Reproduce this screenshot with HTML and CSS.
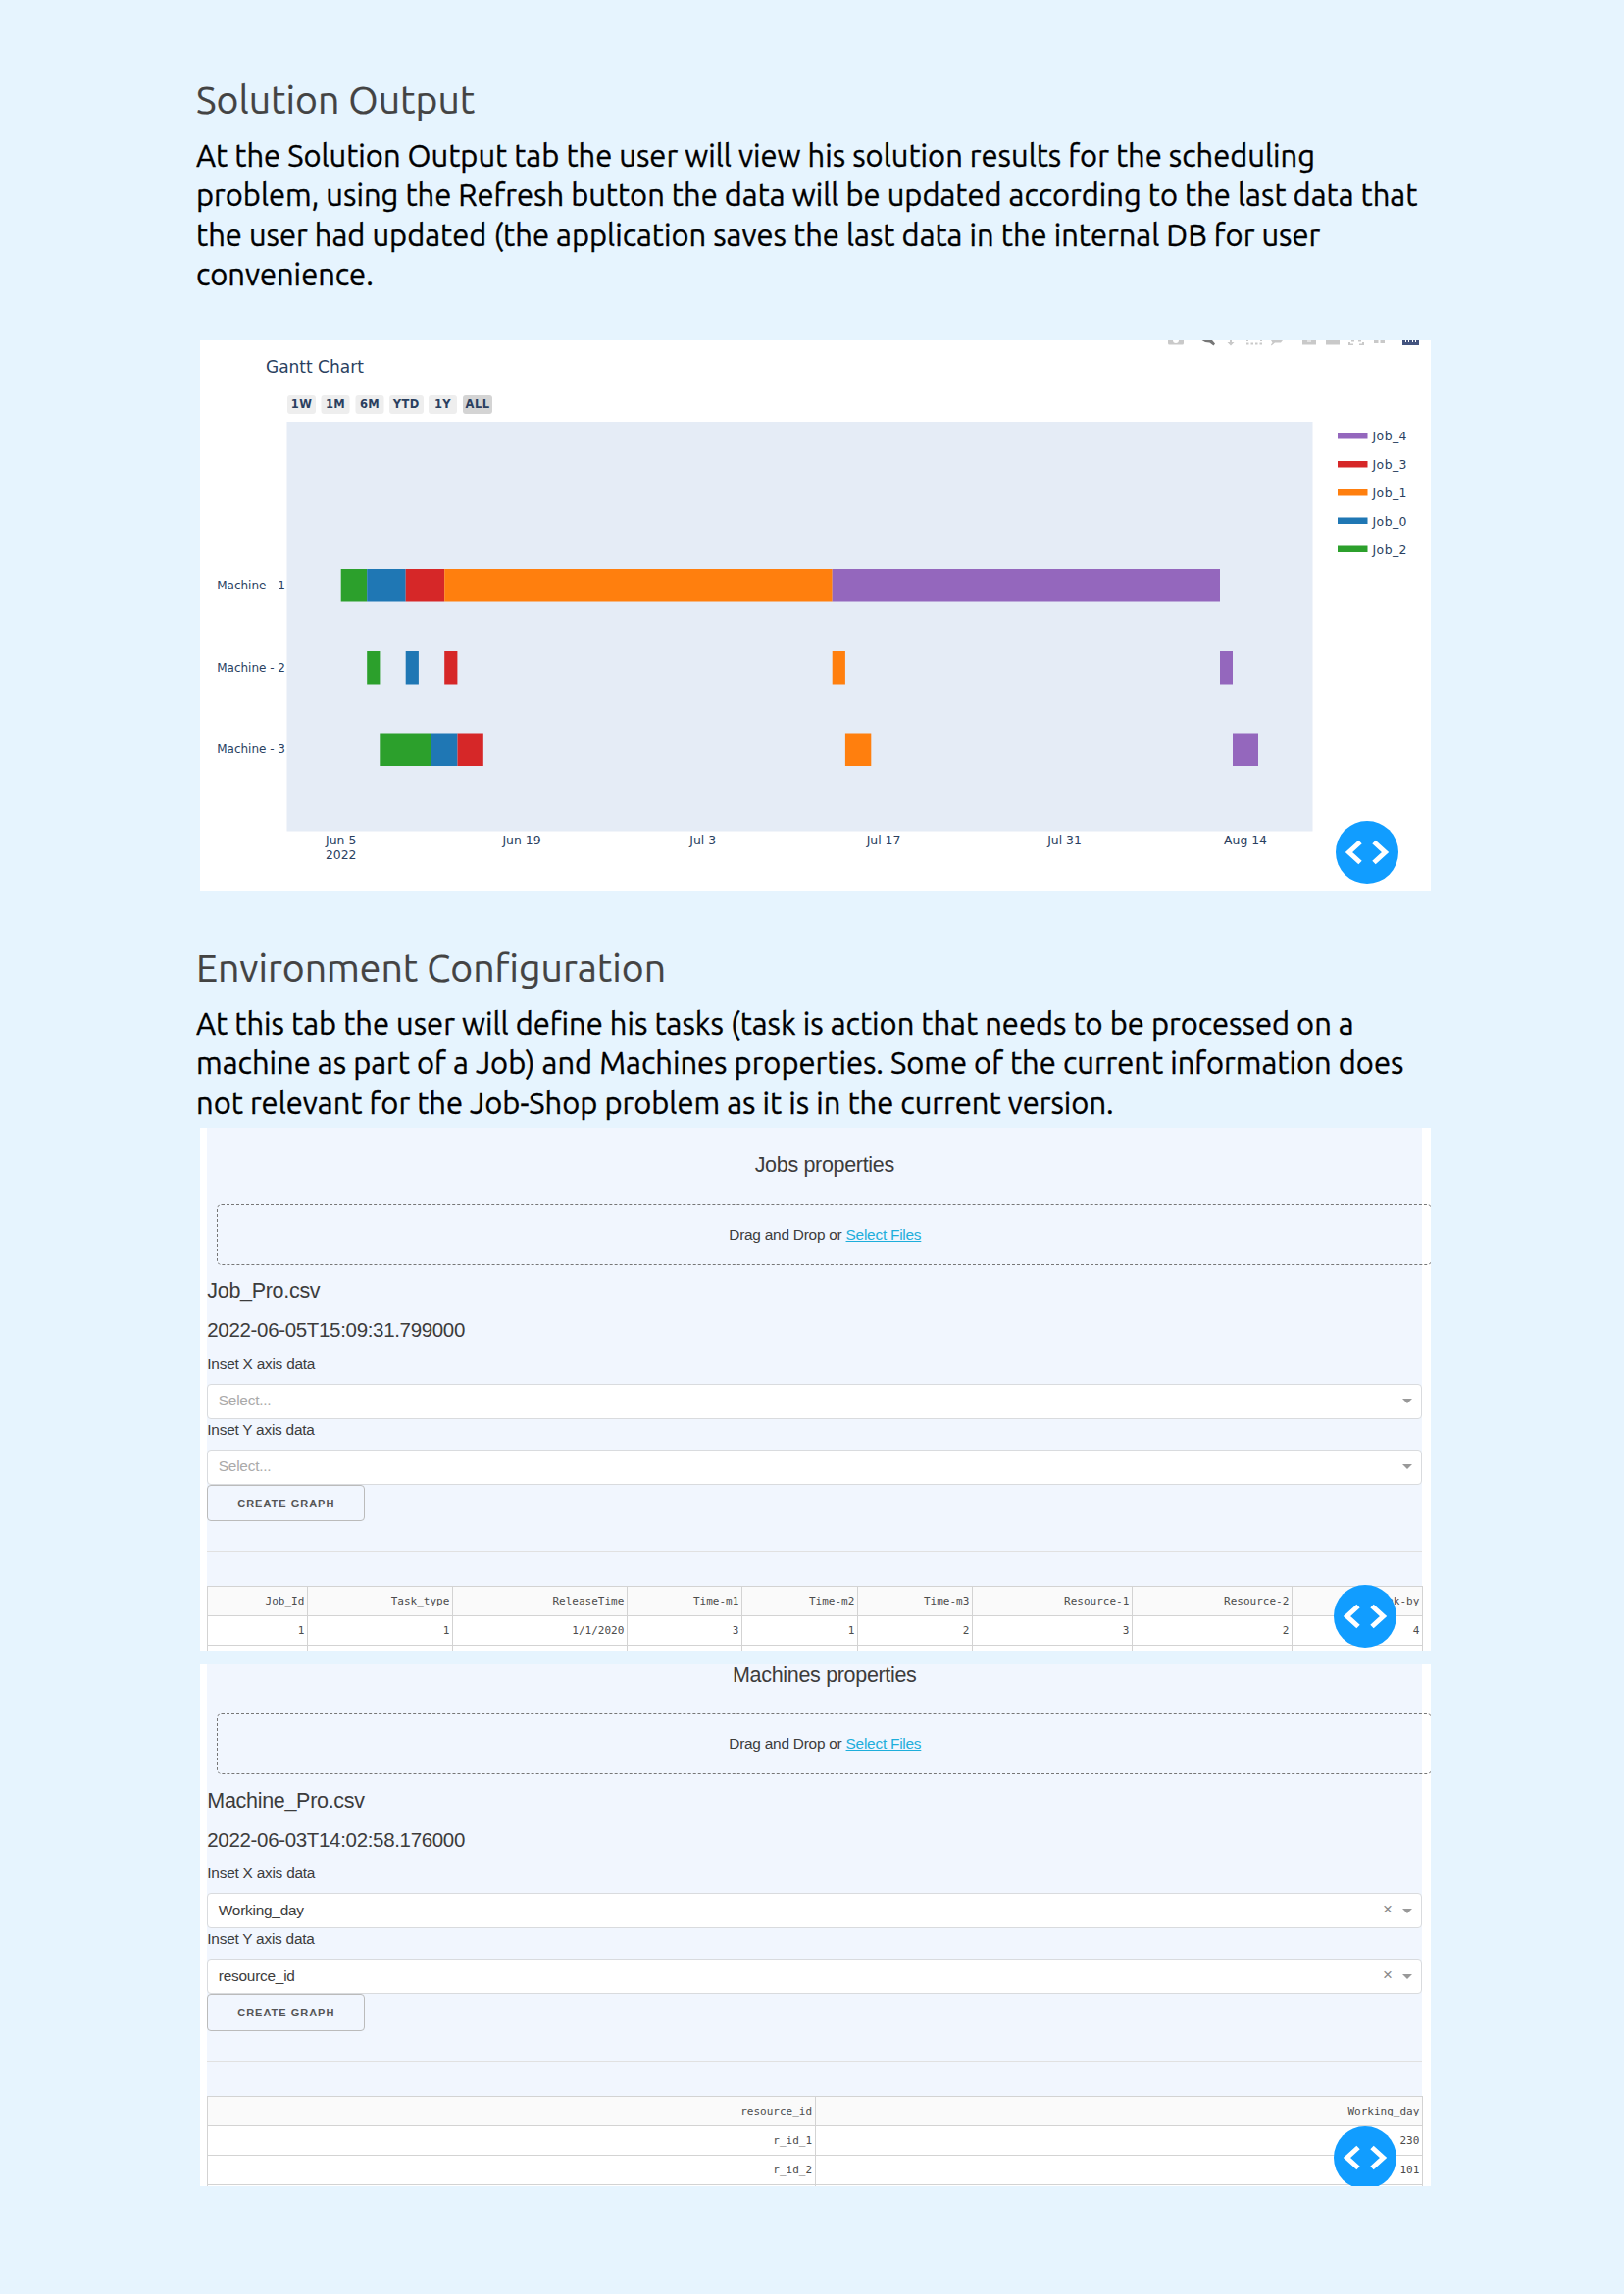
FILE: index.html
```
<!DOCTYPE html>
<html lang="en">
<head>
<meta charset="utf-8">
<title>Solution Output</title>
<link rel="stylesheet" href="styles.css">
</head>
<body>
<main class="page">
  <section>
    <h1 class="heading">Solution Output</h1>
    <p class="copy">At the Solution Output tab the user will view his solution results for the scheduling<br>problem, using the Refresh button the data will be updated according to the last data that<br>the user had updated (the application saves the last data in the internal DB for user<br>convenience.</p>
    <div class="card card-chart">
      <svg class="chart" width="1255" height="561" viewBox="204 347 1255 561">
        <g fill="#c9c9c9">
          <path d="M1191 347h16v3q0 1.500-1.500 1.500h-13q-1.500 0-1.500-1.500z"/>
          <path d="M1196 347a3 3 0 0 0 6 0z" fill="#fff"/>
          <path d="M1225 347h11l3 3.500-1.500 2-4-3q-5 0-8-2.500z" fill="#777"/>
          <path d="M1254 347h2v2h2.500l-3.500 3.500-3.500-3.500h2.500z"/>
          <path d="M1271 347h2v1h-2zM1285 347h2v1h-2zM1271 349.500h2.500v2h-2.500zM1275.500 349.500h2.500v2h-2.500zM1280 349.500h2.500v2h-2.500zM1284.500 349.500h2.500v2h-2.500z"/>
          <path d="M1296 347h12l-2 2.500h-6l-3.500 3-.5-1 1.500-2z"/>
          <path d="M1328 347h14v4.500h-14zM1352 347h14v4.500h-14z"/>
          <path d="M1333 347.500h4v1h-4z" fill="#fff"/>
          <path d="M1375 349h2v1.500h3v1.500h-5zM1391 349h-2v1.500h-3v1.500h5zM1378 347h3v1.500h-3zM1385 347h3v1.500h-3z"/>
          <path d="M1401 347h4.500v3h-4.500zM1407.500 347h4.500v3h-4.500z"/>
        </g>
        <path d="M1430 347h17v5h-17z" fill="#44547f"/>
        <path d="M1433.500 347v2M1436.500 347v2M1440.500 347v2M1443.500 347v2" stroke="#fff"/>

        <text class="chart-title" x="271" y="380">Gantt Chart</text>

        <g class="range" text-anchor="middle">
          <rect x="293" y="403" width="29" height="19" rx="3"/><text x="307.500" y="415.500">1W</text>
          <rect x="327.500" y="403" width="29" height="19" rx="3"/><text x="342" y="415.500">1M</text>
          <rect x="362.500" y="403" width="29" height="19" rx="3"/><text x="377" y="415.500">6M</text>
          <rect x="397" y="403" width="35" height="19" rx="3"/><text x="414.200" y="415.500">YTD</text>
          <rect x="437" y="403" width="29" height="19" rx="3"/><text x="451.500" y="415.500">1Y</text>
          <rect class="on" x="472" y="403" width="30" height="19" rx="3"/><text x="487" y="415.500">ALL</text>
        </g>

        <rect x="292.500" y="430" width="1046" height="417.500" fill="#e5ecf6"/>

        <g fill="#2ca02c">
          <rect x="347.700" y="580" width="26.500" height="33.500"/>
          <rect x="374.200" y="664" width="13.200" height="33.500"/>
          <rect x="387.300" y="747.500" width="52.700" height="33.500"/>
          <rect x="1364" y="556.500" width="30.500" height="6.500"/>
        </g>
        <g fill="#1f77b4">
          <rect x="374.200" y="580" width="39.500" height="33.500"/>
          <rect x="413.700" y="664" width="13.200" height="33.500"/>
          <rect x="440" y="747.500" width="26.500" height="33.500"/>
          <rect x="1364" y="527.500" width="30.500" height="6.500"/>
        </g>
        <g fill="#d62728">
          <rect x="413.700" y="580" width="39.500" height="33.500"/>
          <rect x="453.200" y="664" width="13.200" height="33.500"/>
          <rect x="466.500" y="747.500" width="26.300" height="33.500"/>
          <rect x="1364" y="470" width="30.500" height="6.500"/>
        </g>
        <g fill="#ff7f0e">
          <rect x="453.200" y="580" width="395.500" height="33.500"/>
          <rect x="848.700" y="664" width="13.200" height="33.500"/>
          <rect x="861.900" y="747.500" width="26.400" height="33.500"/>
          <rect x="1364" y="499" width="30.500" height="6.500"/>
        </g>
        <g fill="#9467bd">
          <rect x="848.700" y="580" width="395.300" height="33.500"/>
          <rect x="1244" y="664" width="13" height="33.500"/>
          <rect x="1257" y="747.500" width="26" height="33.500"/>
          <rect x="1364" y="441" width="30.500" height="6.500"/>
        </g>

        <g class="label" text-anchor="end">
          <text x="291" y="601">Machine - 1</text>
          <text x="291" y="684.500">Machine - 2</text>
          <text x="291" y="768">Machine - 3</text>
        </g>
        <g class="label tick" text-anchor="middle">
          <text x="347.700" y="861">Jun 5</text>
          <text x="347.700" y="876">2022</text>
          <text x="532" y="861">Jun 19</text>
          <text x="716.700" y="861">Jul 3</text>
          <text x="901" y="861">Jul 17</text>
          <text x="1085.500" y="861">Jul 31</text>
          <text x="1270" y="861">Aug 14</text>
        </g>
        <g class="label legend">
          <text x="1399.500" y="449">Job_4</text>
          <text x="1399.500" y="477.500">Job_3</text>
          <text x="1399.500" y="506.500">Job_1</text>
          <text x="1399.500" y="535.500">Job_0</text>
          <text x="1399.500" y="564.500">Job_2</text>
        </g>
      </svg>
      <div class="fab fab-chart"><svg viewBox="0 0 64 64"><path d="M25 21.500L13.500 32 25 42.500M39 21.500L50.500 32 39 42.500"/></svg></div>
    </div>
  </section>

  <section class="environment">
    <h2 class="heading">Environment Configuration</h2>
    <p class="copy">At this tab the user will define his tasks (task is action that needs to be processed on a<br>machine as part of a Job) and Machines properties. Some of the current information does<br>not relevant for the Job-Shop problem as it is in the current version.</p>

    <div class="card card-jobs">
      <div class="panel">
        <h3 class="panel-title">Jobs properties</h3>
        <div class="drop">Drag and Drop or&nbsp;<a>Select Files</a></div>
        <h4 class="file">Job_Pro.csv</h4>
        <h5 class="date">2022-06-05T15:09:31.799000</h5>
        <p class="axis">Inset X axis data</p>
        <div class="select empty"><span>Select...</span><i class="arrow"></i></div>
        <p class="axis">Inset Y axis data</p>
        <div class="select empty"><span>Select...</span><i class="arrow"></i></div>
        <button class="create">CREATE GRAPH</button>
        <hr>
        <table class="jobs">
          <colgroup><col class="w1"><col class="w2"><col class="w3"><col class="w4"><col class="w5"><col class="w4"><col class="w6"><col class="w6"><col></colgroup>
          <tr><th>Job_Id</th><th>Task_type</th><th>ReleaseTime</th><th>Time-m1</th><th>Time-m2</th><th>Time-m3</th><th>Resource-1</th><th>Resource-2</th><th>Break-by</th></tr>
          <tr><td>1</td><td>1</td><td>1/1/2020</td><td>3</td><td>1</td><td>2</td><td>3</td><td>2</td><td>4</td></tr>
          <tr><td></td><td></td><td></td><td></td><td></td><td></td><td></td><td></td><td></td></tr>
        </table>
      </div>
      <div class="fab fab-jobs"><svg viewBox="0 0 64 64"><path d="M25 21.500L13.500 32 25 42.500M39 21.500L50.500 32 39 42.500"/></svg></div>
    </div>

    <div class="card card-machines">
      <div class="panel">
        <h3 class="panel-title">Machines properties</h3>
        <div class="drop">Drag and Drop or&nbsp;<a>Select Files</a></div>
        <h4 class="file">Machine_Pro.csv</h4>
        <h5 class="date">2022-06-03T14:02:58.176000</h5>
        <p class="axis">Inset X axis data</p>
        <div class="select"><span>Working_day</span><b>×</b><i class="arrow"></i></div>
        <p class="axis">Inset Y axis data</p>
        <div class="select"><span>resource_id</span><b>×</b><i class="arrow"></i></div>
        <button class="create">CREATE GRAPH</button>
        <hr>
        <table>
          <tr><th>resource_id</th><th>Working_day</th></tr>
          <tr><td>r_id_1</td><td>230</td></tr>
          <tr><td>r_id_2</td><td>101</td></tr>
          <tr><td></td><td></td></tr>
        </table>
      </div>
      <div class="fab fab-machines"><svg viewBox="0 0 64 64"><path d="M25 21.500L13.500 32 25 42.500M39 21.500L50.500 32 39 42.500"/></svg></div>
    </div>
  </section>
</main>
</body>
</html>
```
FILE: styles.css
```
* { box-sizing: border-box; margin: 0; padding: 0; }
body { background: #e6f4fe; }
.page { width: 1656px; height: 2339px; padding: 77.400px 196px 0 200px; overflow: hidden; }

.heading { font: 400 39.2px/48px Ubuntu, "Open Sans", sans-serif; color: #434343; white-space: nowrap; -webkit-text-stroke: .2px #434343; }
.copy { margin-top: 13.600px; font: 400 30.9px/40.5px Ubuntu, "Open Sans", sans-serif; color: #000; white-space: nowrap; -webkit-text-stroke: .35px #000; }
.environment { padding-top: 54.400px; }

.card { position: relative; width: 1255px; margin-left: 4px; background: #fff; overflow: hidden; }
.card-chart { height: 561px; margin-top: 46px; }
.card-jobs { height: 533px; margin-top: 4.500px; }
.card-machines { height: 532px; margin-top: 14px; }
.card-machines .panel { margin-top: -27.500px; }

.chart { display: block; font-family: "DejaVu Sans", Verdana, sans-serif; fill: #2a3f5f; }
.chart-title { font-size: 17px; }
.range { font-size: 11.5px; font-weight: 700; letter-spacing: .4px; }
.range rect { fill: #eee; }
.range .on { fill: #d4d4d4; }
.label { font-size: 12px; }
.tick { font-size: 12.4px; }
.legend { font-size: 12.4px; letter-spacing: .45px; }

.fab { position: absolute; width: 64px; height: 64px; border-radius: 50%; background: #119dff; }
.fab svg { display: block; fill: none; stroke: #fff; stroke-width: 5; }
.fab-chart { left: 1158px; top: 490px; }
.fab-jobs { left: 1156px; top: 466px; }
.fab-machines { left: 1156px; top: 471px; }

.panel { display: flow-root; width: 1239px; height: 600px; margin-left: 7.300px; background: #f1f6fe; font: 400 15.400px/20px "Liberation Sans", Arial, sans-serif; letter-spacing: -.23px; color: #3c3c3c; }
.panel-title { width: 100%; margin: 23.500px 0 0 10px; font-size: 21.500px; font-weight: 400; line-height: 30px; letter-spacing: -.32px; text-align: center; }
.drop { display: flex; align-items: center; justify-content: center; width: 100%; height: 62px; margin: 24.500px 0 0 10px; padding-left: 1px; border: 1px dashed #777; border-radius: 5px; }
.drop a { color: #1eaedb; text-decoration: underline; }
.file { margin-top: 11.300px; font-size: 21.500px; font-weight: 400; line-height: 30px; letter-spacing: -.3px; }
.date { margin-top: 10px; font-size: 20.500px; font-weight: 400; line-height: 30px; letter-spacing: -.33px; }
.axis { margin: 9.400px 0 10px; }
.select { display: flex; align-items: center; height: 36px; padding: 0 9.500px 0 10.500px; background: #fff; border: 1px solid #d9dbde; border-radius: 4px; }
.select span { flex: 1; padding-bottom: 1px; }
.select.empty span { color: #aaa; }
.select + .axis { margin: 1px 0 10.300px; }
.select b { margin: -2px 10px 0 0; font-size: 17px; font-weight: 400; color: #888; }
.arrow { border: 5px solid transparent; border-top-color: #999; border-bottom: 0; }
.create { display: block; width: 161px; height: 37.500px; background: transparent; border: 1px solid #bbb; border-radius: 4px; font: 700 11px/36px "Liberation Sans", Arial, sans-serif; letter-spacing: 1px; color: #555; }
hr { height: 1px; margin: 30px 0 35px; border: 0; background: #e1e1e1; }

table { width: 1239.500px; table-layout: fixed; border-collapse: collapse; background: #fff; font: 400 11px/15px "DejaVu Sans Mono", monospace; letter-spacing: 0; color: #4c4c4c; }
th, td { height: 30px; padding: 0 2.500px 0 0; border: 1px solid #d3d3d3; font-weight: 400; text-align: right; }
th { background: #fafafa; }
.w1 { width: 101.500px; }
.w2 { width: 148px; }
.w3 { width: 178px; }
.w4 { width: 117px; }
.w5 { width: 118px; }
.w6 { width: 163px; }
```
